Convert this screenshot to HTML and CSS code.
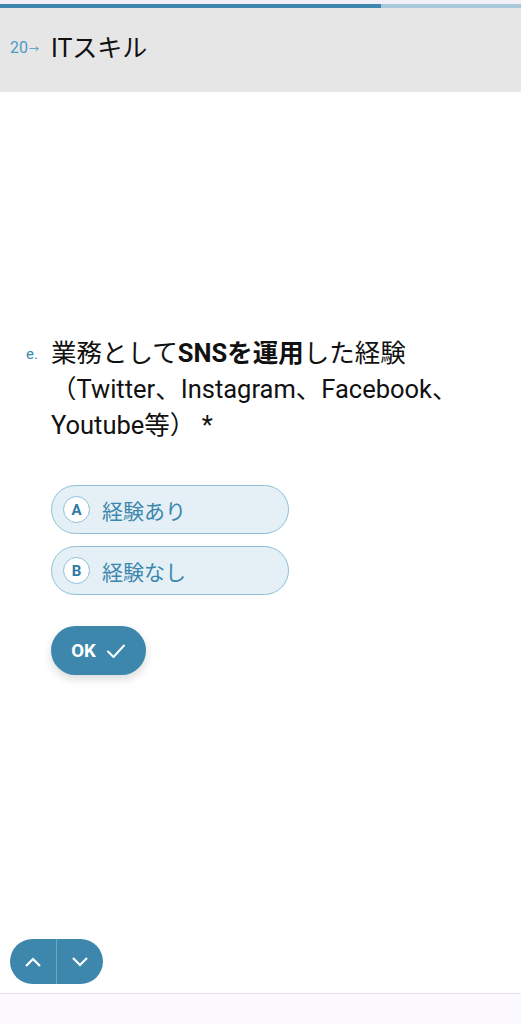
FILE: index.html
```html
<!DOCTYPE html>
<html lang="ja">
<head>
    <meta charset="UTF-8">
    <meta name="viewport" content="width=device-width, initial-scale=1.0">
    <title>ITスキル</title>
    <link rel="stylesheet" href="styles.css">
</head>
<body>
    <div class="page">
        <div class="progress">
            <div class="progress-fill"></div>
        </div>

        <header class="section-head">
            <span class="section-num">20<span class="arrow">→</span></span>
            <h1>ITスキル</h1>
        </header>

        <main class="question">
            <div class="question-title">
                <span class="q-index">e.</span>
                <p>業務として<strong>SNSを運用</strong>した経験（Twitter、Instagram、Facebook、Youtube等） *</p>
            </div>

            <div class="choices">
                <button class="choice" type="button">
                    <span class="key">A</span>
                    <span class="label">経験あり</span>
                </button>
                <button class="choice" type="button">
                    <span class="key">B</span>
                    <span class="label">経験なし</span>
                </button>
            </div>

            <button class="ok" type="button">
                OK
                <svg width="20" height="16" viewBox="0 0 20 16">
                    <path d="M2 8.5 L7.5 14 L18 2.5" fill="none" stroke="#fff" stroke-width="2" stroke-linecap="round" stroke-linejoin="round"/>
                </svg>
            </button>
        </main>

        <!-- 上下ナビ -->
        <nav class="pager">
            <button type="button" aria-label="前へ">
                <svg width="18" height="12" viewBox="0 0 18 12">
                    <path d="M2 10 L9 3 L16 10" fill="none" stroke="#fff" stroke-width="2.2"/>
                </svg>
            </button>
            <button type="button" aria-label="次へ">
                <svg width="18" height="12" viewBox="0 0 18 12">
                    <path d="M2 2 L9 9 L16 2" fill="none" stroke="#fff" stroke-width="2.2"/>
                </svg>
            </button>
        </nav>

        <footer class="bottom-bar"></footer>
    </div>
</body>
</html>
```

FILE: styles.css
```css
:root {
    --primary: #3d87ad;
    --primary-light: #e4f0f6;
    --primary-border: #8ec0d8;
    --head-bg: #e6e6e6;
}

* {
    box-sizing: border-box;
}

body {
    margin: 0;
    font-family: Roboto, "Noto Sans CJK JP", sans-serif;
    background: #fff;
    color: #111;
}

.page {
    height: 1024px;
    display: flex;
    flex-direction: column;
}

.progress {
    height: 8px;
    border-top: 4px solid #f1eff8;
    background: #a9c9da;
}

.progress-fill {
    width: 381px;
    height: 100%;
    background: var(--primary);
}

.section-head {
    height: 84px;
    background: var(--head-bg);
    display: flex;
    align-items: center;
    padding: 0 0 8px 10px;
}

.section-num {
    width: 41px;
    font-size: 16px;
    color: #4c9bc2;
    padding-top: 3px;
}

.arrow {
    font-size: 10px;
    margin-left: 1px;
}

.section-head h1 {
    margin: 0;
    font-size: 25px;
    font-weight: 400;
}

.question {
    flex: 1;
    padding: 243px 0 0 51px;
}

.question-title {
    position: relative;
    padding-right: 50px;
}

.q-index {
    position: absolute;
    left: -25px;
    top: 10px;
    font-size: 15px;
    color: var(--primary);
}

.question-title p {
    margin: 0;
    font-size: 25.5px;
    line-height: 36px;
}

.question-title strong {
    font-weight: 700;
}

.choices {
    margin-top: 42px;
    display: flex;
    flex-direction: column;
    gap: 12px;
}

.choice {
    width: 238px;
    height: 49px;
    display: flex;
    align-items: center;
    gap: 12px;
    padding: 0 0 0 11px;
    border: 1px solid var(--primary-border);
    border-radius: 25px;
    background: var(--primary-light);
    font-family: inherit;
    cursor: pointer;
}

.key {
    width: 27px;
    height: 27px;
    border-radius: 50%;
    background: #fff;
    border: 1px solid var(--primary-border);
    display: flex;
    align-items: center;
    justify-content: center;
    font-size: 15px;
    font-weight: 700;
    color: #2f7aa2;
}

.label {
    font-size: 21px;
    color: var(--primary);
}

.ok {
    margin-top: 31px;
    width: 95px;
    height: 49px;
    border: none;
    border-radius: 25px;
    background: var(--primary);
    color: #fff;
    font-family: inherit;
    font-size: 18.5px;
    font-weight: 700;
    display: flex;
    align-items: center;
    justify-content: center;
    gap: 10px;
    box-shadow: 0 4px 10px rgba(0, 0, 0, 0.15);
    cursor: pointer;
}

.pager {
    display: flex;
    margin: 0 0 9px 10px;
    width: 93px;
    height: 45px;
    border-radius: 23px;
    overflow: hidden;
    background: var(--primary);
}

.pager button {
    flex: 1;
    border: none;
    background: none;
    display: flex;
    align-items: center;
    justify-content: center;
    cursor: pointer;
}

.pager button + button {
    border-left: 1px solid #6aa6c5;
}

.bottom-bar {
    height: 31px;
    border-top: 1px solid #e4e0f2;
    background: #fbf9fe;
}
```
